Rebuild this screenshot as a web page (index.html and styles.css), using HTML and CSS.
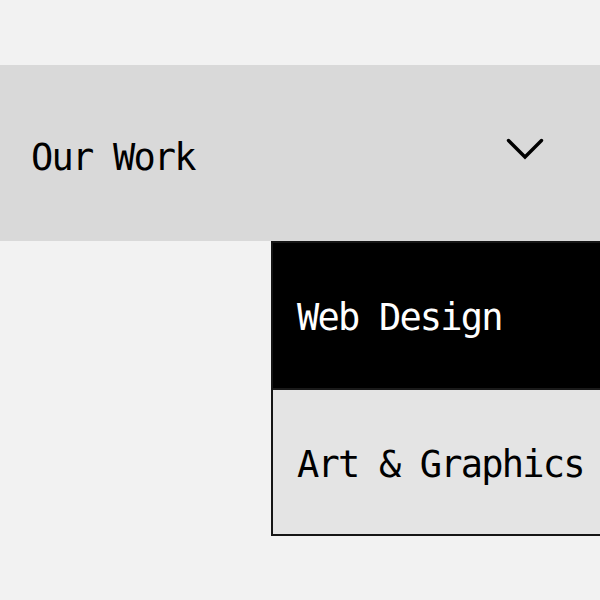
FILE: index.html
```html
<!DOCTYPE html>
<html>
<head>
<meta charset="utf-8">
<link rel="stylesheet" href="styles.css">
</head>
<body>
<nav class="nav">
  <div class="nav-bar">
    <span class="nav-title">Our Work</span>
    <svg class="chevron" width="38" height="22" viewBox="0 0 38 22">
      <polyline points="2.5,2.5 19,19 35.5,2.5" fill="none" stroke="#000" stroke-width="3.4" stroke-linecap="round" stroke-linejoin="miter"/>
    </svg>
  </div>
  <ul class="menu">
    <li class="menu-item active">Web Design</li>
    <li class="menu-item">Art &amp; Graphics</li>
  </ul>
</nav>
</body>
</html>
```
FILE: styles.css
```css
html {
  overflow: hidden;
  background: #f2f2f2;
}
body {
  margin: 0;
  padding: 1px 0 0;
  min-height: 600px;
  box-sizing: border-box;
  background: #f2f2f2;
  font-family: "DejaVu Sans Mono", "Liberation Mono", monospace;
  font-size: 37px;
  letter-spacing: -1.8px;
  color: #000;
}
.nav {
  position: relative;
  margin-top: 64px;
}
.nav-bar {
  height: 176px;
  background: #d9d9d9;
  display: flex;
  align-items: center;
  justify-content: space-between;
  padding: 0 56px 0 31px;
}
.nav-title {
  display: block;
  margin-top: 9px;
}
.chevron {
  display: block;
  margin-top: -8px;
}
.menu {
  position: absolute;
  top: 100%;
  left: 271px;
  right: 0;
  margin: 0;
  padding: 0;
  list-style: none;
  border: 2px solid #151515;
  border-right: none;
}
.menu-item {
  height: 145px;
  box-sizing: border-box;
  padding: 4px 0 0 24px;
  display: flex;
  align-items: center;
  background: #e4e4e4;
  white-space: nowrap;
}
.menu-item + .menu-item {
  border-top: 2px solid #1a1a1a;
  height: 146px;
}
.menu-item.active {
  background: #000;
  color: #fff;
}
```
